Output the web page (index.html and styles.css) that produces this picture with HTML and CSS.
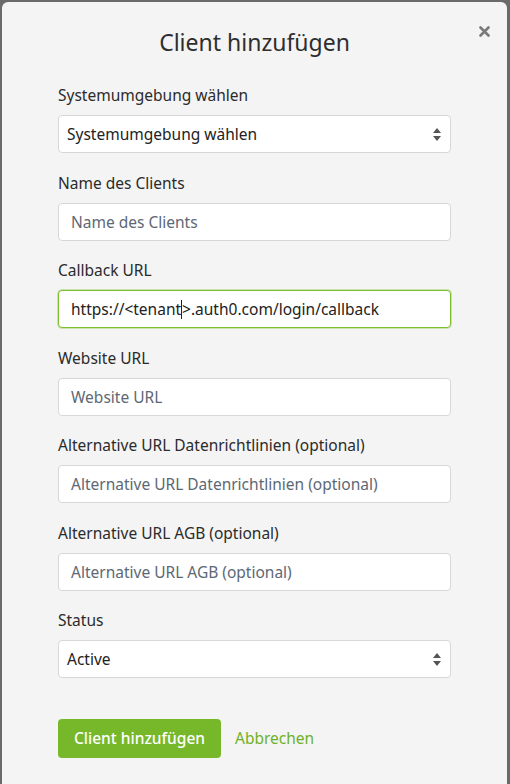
FILE: index.html
```html
<!DOCTYPE html>
<html lang="de">
<head>
<meta charset="utf-8">
<title>Client hinzufügen</title>
<link rel="stylesheet" href="styles.css">
</head>
<body>
<div class="modal">
  <button class="close" type="button" aria-label="Schließen">
    <svg width="11" height="11" viewBox="0 0 11 11"><path d="M1.5 1.5 L9.5 9.5 M9.5 1.5 L1.5 9.5" stroke="#7a7a7a" stroke-width="2.6" stroke-linecap="round"/></svg>
  </button>
  <h1 class="title">Client hinzufügen</h1>
  <form class="form">
    <div class="group">
      <label class="label">Systemumgebung wählen</label>
      <div class="select"><span class="value">Systemumgebung wählen</span><span class="arrows"><svg width="8" height="13" viewBox="0 0 8 13"><path d="M4 0 L8 5 L0 5 Z M0 8 L8 8 L4 13 Z" fill="#555"/></svg></span></div>
    </div>
    <div class="group">
      <label class="label">Name des Clients</label>
      <div class="input"><span class="ph">Name des Clients</span></div>
    </div>
    <div class="group">
      <label class="label">Callback URL</label>
      <div class="input focus"><span class="value">https://&lt;tenant</span><span class="caret"></span><span class="value">&gt;.auth0.com/login/callback</span></div>
    </div>
    <div class="group">
      <label class="label">Website URL</label>
      <div class="input"><span class="ph">Website URL</span></div>
    </div>
    <div class="group">
      <label class="label">Alternative URL Datenrichtlinien (optional)</label>
      <div class="input"><span class="ph">Alternative URL Datenrichtlinien (optional)</span></div>
    </div>
    <div class="group">
      <label class="label">Alternative URL AGB (optional)</label>
      <div class="input"><span class="ph">Alternative URL AGB (optional)</span></div>
    </div>
    <div class="group">
      <label class="label">Status</label>
      <div class="select"><span class="value">Active</span><span class="arrows"><svg width="8" height="13" viewBox="0 0 8 13"><path d="M4 0 L8 5 L0 5 Z M0 8 L8 8 L4 13 Z" fill="#555"/></svg></span></div>
    </div>
    <div class="actions">
      <button class="btn" type="button">Client hinzufügen</button>
      <a class="cancel" href="#">Abbrechen</a>
    </div>
  </form>
</div>
</body>
</html>
```
FILE: styles.css
```css
html, body {
  margin: 0;
  padding: 0;
  height: 100%;
  overflow: hidden;
}
body {
  background: #6a6a6a;
  font-family: "Noto Sans", "Open Sans", sans-serif;
  color: #2b2b2b;
}
.modal {
  position: relative;
  margin: 2px 3px 0 2px;
  height: 800px;
  background: #f4f4f4;
  border-radius: 6px 6px 0 0;
  box-sizing: border-box;
  padding: 22px 56px 0 56px;
}
.close {
  position: absolute;
  top: 24px;
  right: 17px;
  border: 0;
  background: none;
  padding: 0;
  width: 11px;
  height: 11px;
  display: flex;
}
.title {
  margin: 0;
  text-align: center;
  font-weight: 400;
  font-size: 23px;
  line-height: 36px;
  color: #2e2e2e;
}
.form {
  margin-top: 25px;
  display: flex;
  flex-direction: column;
}
.group {
  display: flex;
  flex-direction: column;
  margin-bottom: 19.5px;
}
.label {
  font-size: 15.5px;
  line-height: 20px;
  margin-bottom: 10px;
  color: #2b2b2b;
}
.input, .select {
  height: 38px;
  box-sizing: border-box;
  background: #fff;
  border: 1px solid #d7d7d7;
  border-radius: 4px;
  display: flex;
  align-items: center;
  padding: 0 12px;
  font-size: 15.5px;
}
.select {
  padding-left: 8px;
  justify-content: space-between;
}
.arrows {
  display: flex;
  margin-right: -3px;
}
.ph {
  color: #5d6875;
}
.value {
  color: #222;
  white-space: pre;
}
.focus {
  border: 1px solid #7cbf2d;
  box-shadow: 0 0 0 1px rgba(124, 191, 45, 0.35);
}
.caret {
  display: inline-block;
  width: 1px;
  height: 19px;
  background: #222;
}
.actions {
  margin-top: 21px;
  display: flex;
  align-items: center;
  gap: 14px;
}
.btn {
  height: 39px;
  padding: 0 16px;
  border: 0;
  border-radius: 4px;
  background: #77b82a;
  color: #fff;
  font-family: inherit;
  font-size: 15.5px;
  font-weight: 500;
}
.cancel {
  color: #6fb12a;
  text-decoration: none;
  font-size: 15.5px;
}
```
